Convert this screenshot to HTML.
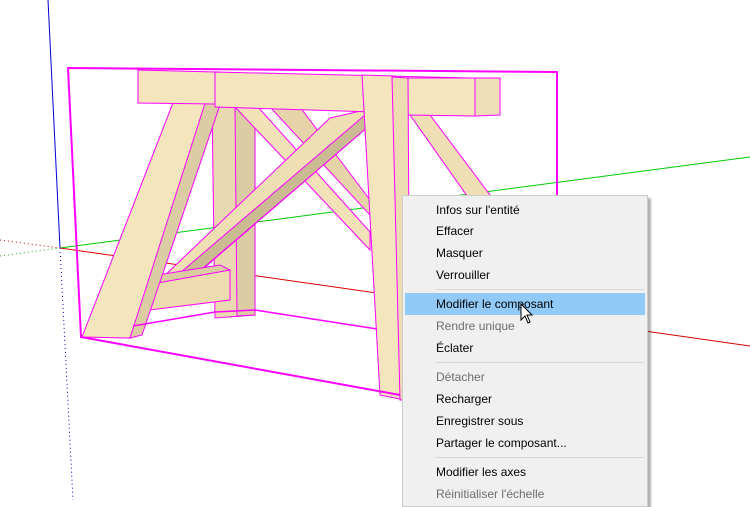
<!DOCTYPE html>
<html><head><meta charset="utf-8"><style>
html,body{margin:0;padding:0;width:750px;height:500px;overflow:hidden;background:#fff;font-family:"Segoe UI","Liberation Sans",sans-serif}
svg{position:absolute;left:0;top:0}
.menu{position:absolute;left:402px;top:195px;width:244px;height:310px;background:#f0f0f0;border:1px solid #ccc;box-shadow:3px 3px 2px rgba(0,0,0,0.3)}
.it{position:absolute;left:33px;font-size:12px;color:#000;line-height:16px}
.dis{color:#6d6d6d}
.sep{position:absolute;left:32px;right:3px;height:1px;background:#d7d7d7}
.hl{position:absolute;left:2px;right:2px;top:97px;height:22px;background:#91c9f7}
</style></head><body>
<svg width="750" height="500" viewBox="0 0 750 500">
<line x1="48" y1="0" x2="60" y2="248" stroke="#0000dd" stroke-width="1"/>
<line x1="60" y1="248" x2="73" y2="500" stroke="#0000dd" stroke-width="1" stroke-dasharray="1 3"/>
<line x1="0" y1="240" x2="60" y2="248" stroke="#cc0000" stroke-width="1" stroke-dasharray="1 3"/>
<line x1="0" y1="256" x2="60" y2="248" stroke="#00bb00" stroke-width="1" stroke-dasharray="1 3"/>
<line x1="60" y1="248" x2="750" y2="157" stroke="#00cc00" stroke-width="1"/>
<line x1="60" y1="248" x2="750" y2="346" stroke="#dd0000" stroke-width="1"/>
<g stroke="#ff00ff" stroke-width="1" fill="#f3e2b8">
<polygon points="212,105 252,105 255,315 215,318" fill="#ead9b0"/>
<polygon points="235,107 255,107 255,315 237,316" fill="#dccca3"/>
<polygon points="235,107 258,107 370,232 370,250" fill="#f3e2b8"/>
<polygon points="270,107 300,107 370,200 370,215" fill="#e6d4a8"/>
<polygon points="330,118 365,110 370,125 190,280 160,280" fill="#f0dfb4"/>
<polygon points="365,115 370,125 195,275 180,273" fill="#cbbb92"/>
<polygon points="148,278 220,266 230,270 230,300 150,310" fill="#eedcb0"/>
<polygon points="145,277 220,265 230,270 152,284" fill="#dccba0"/>
<polygon points="410,115 430,115 490,195 470,200" fill="#f0dfb4"/>
<polygon points="185,72 220,72 130,338 82,337" fill="#f5e5bd"/>
<polygon points="215,72 225,90 142,335 130,338" fill="#dccca3"/>
<polygon points="138,70 215,72 215,104 138,103" fill="#f5e5bd"/>
<polygon points="215,72 470,78 470,115 215,107" fill="#f5e5bd"/>
<polygon points="407,78 475,78 475,116 407,115" fill="#f5e5bd"/>
<polygon points="475,78 500,78 500,115 475,116" fill="#efdfb8"/>
<polygon points="362,75 395,76 405,400 380,395" fill="#f5e5bd"/>
<polygon points="392,77 408,78 410,400 400,400" fill="#eddcb2"/>
</g>
<g stroke="#ff00ff" stroke-width="2" fill="none">
<polyline points="557,200 557,72 68,68 81,337 400,395"/>
</g>
<polyline points="133,326 215,312 255,310 377,329" stroke="#ff00ff" stroke-width="1.5" fill="none"/>
</svg>
<div class="menu">
<div class="it" style="top:6px">Infos sur l'entité</div>
<div class="it" style="top:27px">Effacer</div>
<div class="it" style="top:49px">Masquer</div>
<div class="it" style="top:71px">Verrouiller</div>
<div class="sep" style="top:93px"></div>
<div class="hl"></div>
<div class="it" style="top:100px">Modifier le composant</div>
<div class="it dis" style="top:122px">Rendre unique</div>
<div class="it" style="top:144px">Éclater</div>
<div class="sep" style="top:166px"></div>
<div class="it dis" style="top:173px">Détacher</div>
<div class="it" style="top:195px">Recharger</div>
<div class="it" style="top:217px">Enregistrer sous</div>
<div class="it" style="top:239px">Partager le composant...</div>
<div class="sep" style="top:261px"></div>
<div class="it" style="top:268px">Modifier les axes</div>
<div class="it dis" style="top:290px">Réinitialiser l'échelle</div>
</div>
<svg width="750" height="500" style="pointer-events:none"><path d="M521,304 L521,320 L525,316 L528,323 L530,322 L527,315 L532,315 Z" fill="#fff" stroke="#000" stroke-width="1"/></svg>
</body></html>
